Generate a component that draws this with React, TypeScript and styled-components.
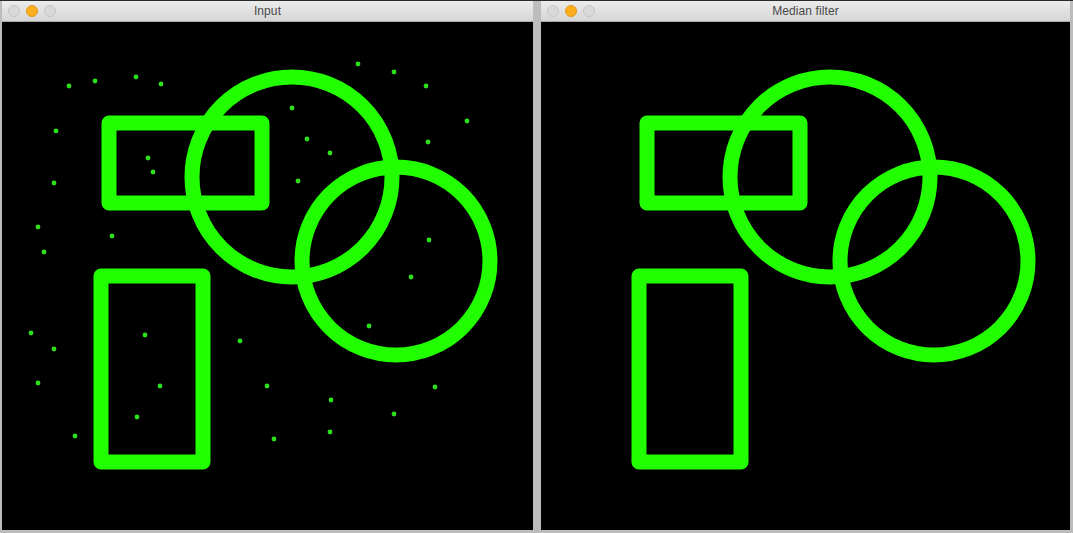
import React from "react";
import styled, { createGlobalStyle } from "styled-components";

const Global = createGlobalStyle`
  html, body { margin: 0; padding: 0; background: #b9b9b9; }
  body { width: 1073px; height: 533px; overflow: hidden; font-family: "Liberation Sans", Arial, sans-serif; }
`;

const Screen = styled.div`
  width: 1073px;
  height: 533px;
  box-sizing: border-box;
  border-top: 1px solid #2a2a2a;
  padding: 0 3px 3px 2px;
  display: flex;
  gap: 8px;
  background: #bcbcbc;
`;

const Window = styled.div<{ $w: number }>`
  width: ${(p) => p.$w}px;
  display: flex;
  flex-direction: column;
`;

const TitleBar = styled.div`
  height: 21px;
  flex: none;
  position: relative;
  display: flex;
  align-items: center;
  justify-content: center;
  background: linear-gradient(#ececec, #d6d6d6);
  border-bottom: 1px solid #a9a9a9;
  box-sizing: border-box;
`;

const Lights = styled.div`
  position: absolute;
  left: 6px;
  top: 4px;
  display: flex;
  gap: 6px;
`;

const Light = styled.span<{ $on?: boolean }>`
  width: 12px;
  height: 12px;
  border-radius: 50%;
  box-sizing: border-box;
  background: ${(p) => (p.$on ? "#fcae1e" : "#d9d9d9")};
  border: 1px solid ${(p) => (p.$on ? "#e09a1a" : "#c6c6c6")};
`;

const Title = styled.span`
  font-size: 12px;
  color: #4a4a4a;
  letter-spacing: 0.1px;
`;

const Canvas = styled.svg`
  display: block;
  flex: 1;
  width: 100%;
  background: #000;
`;

const GREEN = "#22ff00";
const DOT = "#2ee01c";

const dots: [number, number][] = [
  [69, 86], [95, 81], [136, 77], [161, 84], [358, 64], [394, 72], [426, 86], [467, 121],
  [56, 131], [292, 108], [307, 139], [330, 153], [428, 142], [148, 158], [153, 172],
  [298, 181], [54, 183], [38, 227], [112, 236], [44, 252], [429, 240], [411, 277],
  [369, 326], [31, 333], [145, 335], [54, 349], [240, 341], [38, 383], [160, 386],
  [267, 386], [435, 387], [331, 400], [137, 417], [394, 414], [330, 432], [75, 436], [274, 439],
];

const Shapes: React.FC<{ noisy?: boolean }> = ({ noisy }) => (
  <g>
    <g fill="none" stroke={GREEN} strokeWidth={15} strokeLinejoin="round">
      <rect x={109} y={123} width={153} height={80} />
      <rect x={101} y={276} width={102} height={186} />
      <circle cx={292} cy={177} r={100} />
      <circle cx={396} cy={261} r={94} />
    </g>
    {noisy &&
      dots.map(([x, y], i) => <circle key={i} cx={x} cy={y} r={2.4} fill={DOT} />)}
  </g>
);

const App: React.FC = () => (
  <>
    <Global />
    <Screen>
      <Window $w={531}>
        <TitleBar>
          <Lights>
            <Light />
            <Light $on />
            <Light />
          </Lights>
          <Title>Input</Title>
        </TitleBar>
        <Canvas viewBox="2 22 531 508" preserveAspectRatio="none">
          <Shapes noisy />
        </Canvas>
      </Window>
      <Window $w={529}>
        <TitleBar>
          <Lights>
            <Light />
            <Light $on />
            <Light />
          </Lights>
          <Title>Median filter</Title>
        </TitleBar>
        <Canvas viewBox="3 22 529 508" preserveAspectRatio="none">
          <Shapes />
        </Canvas>
      </Window>
    </Screen>
  </>
);

export default App;
